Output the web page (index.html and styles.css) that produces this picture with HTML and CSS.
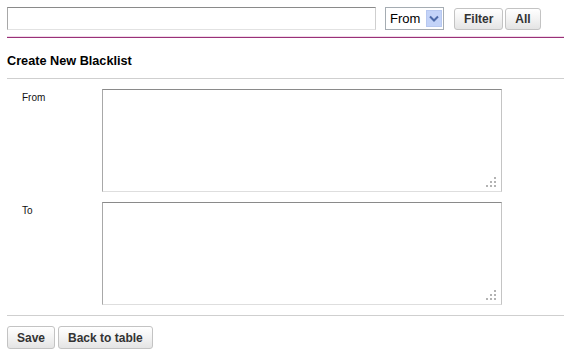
FILE: index.html
```html
<!DOCTYPE html>
<html lang="en">
<head>
    <meta charset="UTF-8">
    <meta name="viewport" content="width=device-width, initial-scale=1.0">
    <title>Blacklist</title>
    <link rel="stylesheet" href="styles.css">
</head>
<body>
    <div class="toolbar">
        <input type="text" class="search" id="search">
        <span class="select-wrap">
            <select class="select" id="field">
                <option>From</option>
                <option>To</option>
            </select>
            <svg class="select-arrow" width="16" height="17" viewBox="0 0 16 17">
                <rect x="0.5" y="0.5" width="15" height="16" fill="#c3d3f8" stroke="#b7c8f0"/>
                <path d="M4 6.5 L8 10.5 L12 6.5" fill="none" stroke="#4d6aa8" stroke-width="2"/>
            </svg>
        </span>
        <button class="btn btn-filter">Filter</button>
        <button class="btn">All</button>
    </div>
    <div class="rule-purple"></div>

    <h2 class="section-title">Create New Blacklist</h2>

    <div class="form">
        <div class="form-row">
            <label class="form-label" for="from">From</label>
            <span class="area-wrap">
                <textarea id="from" class="area"></textarea>
                <svg class="grip" width="10" height="10" viewBox="0 0 10 10">
                    <rect x="8" y="0" width="2" height="2"/>
                    <rect x="4" y="4" width="2" height="2"/>
                    <rect x="8" y="4" width="2" height="2"/>
                    <rect x="0" y="8" width="2" height="2"/>
                    <rect x="4" y="8" width="2" height="2"/>
                    <rect x="8" y="8" width="2" height="2"/>
                </svg>
            </span>
        </div>
        <div class="form-row">
            <label class="form-label" for="to">To</label>
            <span class="area-wrap">
                <textarea id="to" class="area"></textarea>
                <svg class="grip" width="10" height="10" viewBox="0 0 10 10">
                    <rect x="8" y="0" width="2" height="2"/>
                    <rect x="4" y="4" width="2" height="2"/>
                    <rect x="8" y="4" width="2" height="2"/>
                    <rect x="0" y="8" width="2" height="2"/>
                    <rect x="4" y="8" width="2" height="2"/>
                    <rect x="8" y="8" width="2" height="2"/>
                </svg>
            </span>
        </div>
    </div>

    <div class="actions">
        <button class="btn">Save</button>
        <button class="btn">Back to table</button>
    </div>
</body>
</html>
```

FILE: styles.css
```css
body {
    font-family: "Liberation Sans", Arial, sans-serif;
    margin: 7px 0 0 7px;
    background: #fff;
    color: #000;
}
.toolbar {
    display: flex;
    align-items: center;
    height: 23px;
    margin-bottom: 6px;
}
.search {
    box-sizing: border-box;
    width: 369px;
    height: 23px;
    margin: 0;
    padding: 2px 4px;
    border: 1px solid;
    border-color: #8a8a8a #cfcfcf #e2e2e2 #a8a8a8;
    font: 13px "Liberation Sans", Arial, sans-serif;
    outline: none;
}
.select-wrap {
    position: relative;
    display: inline-block;
    margin-left: 9px;
    height: 23px;
}
.select {
    box-sizing: border-box;
    width: 59px;
    height: 23px;
    margin: 0;
    padding: 0 0 0 4px;
    border: 1px solid #a5acb2;
    border-radius: 0;
    background: #fff;
    font: 13px "Liberation Sans", Arial, sans-serif;
    color: #000;
    appearance: none;
    -webkit-appearance: none;
    outline: none;
}
.select-arrow {
    position: absolute;
    right: 2px;
    top: 3px;
    pointer-events: none;
}
.btn {
    box-sizing: border-box;
    height: 22px;
    margin: 0;
    padding: 0 9px;
    border: 1px solid #c3c3c3;
    border-radius: 3px;
    background: linear-gradient(#ffffff, #f4f4f4 45%, #e4e4e4);
    font: bold 12px "Liberation Sans", Arial, sans-serif;
    color: #333;
    cursor: pointer;
}
.btn + .btn {
    margin-left: 2px;
}
.btn-filter {
    margin-left: 10px;
}
.rule-purple {
    border-top: 1px solid #f1d9e8;
    border-bottom: 1px solid #993178;
}
.section-title {
    margin: 16px 0 0;
    padding: 0 0 9px;
    font-size: 12.7px;
    line-height: 15px;
    font-weight: bold;
    border-bottom: 1px solid #cfcfcf;
}
.form {
    padding: 10px 0 10px;
    border-bottom: 1px solid #cfcfcf;
}
.form-row {
    display: flex;
    padding-left: 15px;
}
.form-row + .form-row {
    margin-top: 10px;
}
.form-label {
    width: 80px;
    padding-top: 3px;
    font-size: 10px;
    line-height: 12px;
    color: #111;
}
.area-wrap {
    position: relative;
    display: block;
    line-height: 0;
}
.area {
    box-sizing: border-box;
    display: block;
    width: 400px;
    height: 103px;
    margin: 0;
    padding: 2px;
    border: 1px solid;
    border-color: #8a8a8a #c4c4c4 #dedede #a8a8a8;
    resize: none;
    outline: none;
    font: 12px "Liberation Sans", Arial, sans-serif;
}
.grip {
    position: absolute;
    right: 6px;
    bottom: 5px;
    fill: #b3b3b3;
    pointer-events: none;
}
.actions {
    display: flex;
    padding-top: 10px;
}
.actions .btn {
    height: 23px;
}
.actions .btn + .btn {
    margin-left: 3px;
}
```
